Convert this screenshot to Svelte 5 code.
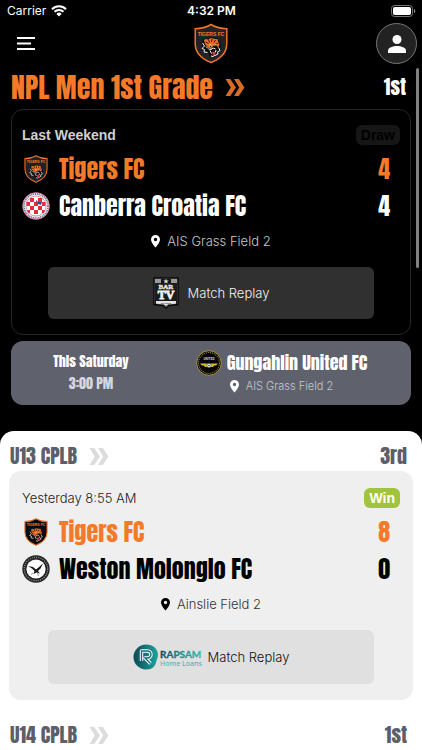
<script>
  const matches = {
    npl: {
      when: 'Last Weekend',
      result: 'Draw',
      teams: [
        { name: 'Tigers FC', score: 4, logo: 'tigers' },
        { name: 'Canberra Croatia FC', score: 4, logo: 'croatia' }
      ],
      venue: 'AIS Grass Field 2',
      sponsor: 'bartv'
    },
    u13: {
      when: 'Yesterday 8:55 AM',
      result: 'Win',
      teams: [
        { name: 'Tigers FC', score: 8, logo: 'tigers' },
        { name: 'Weston Molonglo FC', score: 0, logo: 'weston' }
      ],
      venue: 'Ainslie Field 2',
      sponsor: 'rapsam'
    }
  };
</script>

{#snippet tigers(cls)}
  <svg class={cls} viewBox="0 0 34 40" role="img" aria-label="Tigers FC crest">
    <path d="M17 1C12 4 6.500 5.200 1.200 5.200V20C1.200 29 8 35.500 17 39c9-3.500 15.800-10 15.800-19V5.200C27.500 5.200 22 4 17 1z" fill="#222126" stroke="#ee7328" stroke-width="1.500" />
    <text x="17" y="12" text-anchor="middle" font-family="Liberation Sans" font-weight="700" font-size="5" fill="#f47a2a">TIGERS FC</text>
    <path d="M8 18l2-3 3 0 4-1.500 5 1 2 0 1 3 2 4-1 5-3 4-4 3-3-1-2-4-5-1-1-4z" fill="#0c0c0c" />
    <path d="M10 17l1-1.500 3 .5 3-1.500 4 1 2.500 0 .5 2.500 1.500 3-1.500 3-2-2.500-3 1-1.500 3-3.500-1.500-3-3.500z" fill="#ec6d24" />
    <path d="M14.500 16l1 3M18 15.500l-.5 3M21.500 16.500l-1.500 2.500M11.500 18.500l3 1.500M24 20l-2.500.5M16 22.500l1.500 1.500" stroke="#111" stroke-width=".9" />
    <path d="M8.500 19.500l2 3-2.500 2.500 2.500 1-.5 2.500 3.500.500M12 23l2 2M24.500 24l1.500 3-2.500 1.500.500 2-3 1.500M14.500 25.500l2.500.500 2-1.500 2.500 1" fill="none" stroke="#f4f4f4" stroke-width="1" />
    <path d="M16 27l1.500 3M22 26.500l-.5 2.500M17 32.500l2 .5 2-1.500" stroke="#fff" stroke-width="1" fill="none" />
    <path d="M18 28.500l3-.5.500 3-2.500 1.500z" fill="#d63238" />
    <path d="M15.500 21l2 .5M20.500 21.500l2-.5" stroke="#f9e49b" stroke-width=".9" />
  </svg>
{/snippet}

{#snippet croatia()}
  <svg class="crest" viewBox="0 0 28 28" role="img" aria-label="Canberra Croatia crest">
    <circle cx="14" cy="14" r="13.500" fill="#f3f0f4" />
    <circle cx="14" cy="14" r="12" fill="none" stroke="#60609a" stroke-width="1.500" stroke-dasharray="1.100 .8" />
    <circle cx="14" cy="14" r="13.300" fill="none" stroke="#dc5264" stroke-width=".6" />
    <circle cx="14" cy="14" r="10" fill="#fff" stroke="#cc3342" stroke-width=".5" />
    <path d="M8 6h4v4H8zM16 6h4v4h-4zM4.500 10H8v4H4.500zM12 10h4v4h-4zM20 10h3.500v4H20zM8 14h4v4H8zM16 14h4v4h-4zM5 18h3v3H6zM12 18h4v4h-4zM20 18h3l-1 3h-2z" fill="#e22e3d" />
    <path d="M14 8l2 2h4l-1 3-3-1-2-2z" fill="#434c88" />
  </svg>
{/snippet}

{#snippet weston()}
  <svg class="crest" viewBox="0 0 28 28" role="img" aria-label="Weston Molonglo crest">
    <circle cx="14" cy="14" r="13.700" fill="#252525" />
    <circle cx="14" cy="14" r="11.700" fill="none" stroke="#999" stroke-width="1.200" stroke-dasharray="1 1.200" />
    <circle cx="14" cy="14" r="9.600" fill="#fff" />
    <path d="M6 11l5 1 3 2.500 2.500-2L21 8.500l-2.500 5-2.500 2.500 2 2.500-3.500-1-3 1.500 1-3-2.500-2.500z" fill="#161616" />
    <path d="M15 17l1.500 4M11 18l-2 1.500" fill="none" stroke="#777" stroke-width=".8" />
  </svg>
{/snippet}

{#snippet gungahlin()}
  <svg class="away-crest" viewBox="0 0 26 26" role="img" aria-label="Gungahlin United crest">
    <circle cx="13" cy="13" r="12.300" fill="#080808" stroke="#b6a23d" stroke-width=".9" />
    <circle cx="13" cy="13" r="10.500" fill="none" stroke="#9a8b3d" stroke-width="1.100" stroke-dasharray="1 1" />
    <circle cx="13" cy="13" r="9.300" fill="#050505" />
    <text x="13" y="10" text-anchor="middle" font-family="Liberation Sans" font-weight="700" font-size="3" fill="#ddd">UNITED</text>
    <path d="M4 13.500h7l2 1 2-1h7l-2 2h-2l-1 1.500H9L8 15.500H6z" fill="#d9bd32" />
    <circle cx="13" cy="15.500" r="2.200" fill="#eee" stroke="#222" stroke-width=".5" />
    <circle cx="13" cy="15.500" r=".7" fill="#111" />
  </svg>
{/snippet}

{#snippet bartv()}
  <svg class="bartv" viewBox="0 0 26 32" role="img" aria-label="Bar TV Sports">
    <path d="M1 1h24v26.500L16 28.500l-3 2.500-3-2.500-9-1z" fill="#999" stroke="#090909" stroke-width="1.500" stroke-linejoin="round" />
    <path d="M2 6h22v21l-8 .5-3 2-3-2-8-.5z" fill="#1c1c1c" />
    <path d="M8 2h10v5H8z" fill="#171717" />
    <path d="M13 1.800l.8 1.700 1.900.1-1.500 1.100.6 1.900-1.800-1-1.800 1 .6-1.900-1.500-1.100 1.900-.1z" fill="#ddd" />
    <text x="13" y="11.500" text-anchor="middle" font-family="Liberation Serif" font-weight="700" font-size="7" fill="#e5e5e5" stroke="#e5e5e5" stroke-width=".4">BAR</text>
    <text x="13" y="21.800" text-anchor="middle" font-family="Liberation Serif" font-weight="700" font-size="12" fill="#f2f2f2" stroke="#f2f2f2" stroke-width=".8">TV</text>
    <path d="M3 24h20v2.700l-7.500.5L13 29l-2.500-1.800-7.500-.5z" fill="#e2e2e2" />
    <text x="13" y="26.800" text-anchor="middle" font-family="Liberation Sans" font-weight="700" font-size="2.500" fill="#333">SPORTS</text>
  </svg>
{/snippet}

{#snippet rapsam()}
  <svg class="rapsam" viewBox="0 0 70 28" role="img" aria-label="Rapsam Home Loans">
    <defs>
      <linearGradient id="disc" x1="0" y1="0" x2="1" y2="0"><stop stop-color="#0b4a57" /><stop offset="1" stop-color="#21a49c" /></linearGradient>
      <linearGradient id="word" x1="0" y1="0" x2="1" y2="0"><stop stop-color="#124b59" /><stop offset="1" stop-color="#35bfb4" /></linearGradient>
    </defs>
    <path d="M13 1.500c7 0 12.500 4.500 12 11-.2 2-1 3.500-1.500 5.500-1 5-4 8.500-10.500 8.500A12.500 12.500 0 0 1 13 1.500z" fill="url(#disc)" />
    <path d="M8.500 18V8h6a3.500 3.500 0 0 1 0 7h-2.500l5.500 5.500" fill="none" stroke="#fff" stroke-width="3.400" stroke-linejoin="round" />
    <path d="M8.500 18.500V8h6a3.500 3.500 0 0 1 0 7h-2.500l5.500 5.500" fill="none" stroke="#146d74" stroke-width="1.400" />
    <text x="27" y="15" font-family="Lato" font-weight="700" font-size="10" fill="url(#word)" stroke="url(#word)" stroke-width=".3">RAPSAM</text>
    <text x="27" y="22.500" font-family="Noto Sans" font-weight="500" font-size="7" fill="#4fb8b2">Home Loans</text>
  </svg>
{/snippet}

{#snippet chevrons()}
  <svg class="chevrons" viewBox="0 0 20 18" aria-hidden="true">
    <path d="M0 0h5l6 9-6 9H0l5.500-9zM9 0h5l6 9-6 9H9l5.500-9z" fill="currentColor" />
  </svg>
{/snippet}

{#snippet venue(name)}
  <p class="venue">
    <svg class="pin" viewBox="0 0 9 13" aria-hidden="true">
      <path d="M4.500 0A4.500 4.500 0 0 0 0 4.500C0 7.700 4.500 12.500 4.500 12.500S9 7.700 9 4.500A4.500 4.500 0 0 0 4.500 0zm0 6.200a1.700 1.700 0 1 1 0-3.400 1.700 1.700 0 0 1 0 3.400z" fill="currentColor" />
    </svg>
    <span>{name}</span>
  </p>
{/snippet}

{#snippet heading(title, rank)}
  <h2 class="heading">
    <a href="#ladder"><span>{title}</span>{@render chevrons()}</a>
    <span class="rank">{rank}</span>
  </h2>
{/snippet}

{#snippet match(m)}
  <article class="match">
    <div class="match-top">
      <span class="when">{m.when}</span>
      <span class="result">{m.result}</span>
    </div>
    {#each m.teams as team}
      <div class="team" class:own={team.logo === 'tigers'}>
        {#if team.logo === 'tigers'}
          {@render tigers('crest')}
        {:else if team.logo === 'croatia'}
          {@render croatia()}
        {:else}
          {@render weston()}
        {/if}
        <span class="name">{team.name}</span>
        <span class="score">{team.score}</span>
      </div>
    {/each}
    {@render venue(m.venue)}
    <button class="replay" type="button">
      {#if m.sponsor === 'bartv'}{@render bartv()}{:else}{@render rapsam()}{/if}
      <span>Match Replay</span>
    </button>
  </article>
{/snippet}

<div class="app">
  <div class="status">
    <span class="carrier">
      Carrier
      <svg width="16" height="12" viewBox="0 0 16 12" aria-hidden="true">
        <path d="M1 4.200a10 10 0 0 1 14 0M3.500 6.800a6.400 6.400 0 0 1 9 0" fill="none" stroke="#fff" stroke-width="2" />
        <path d="M8 11.500L5.400 8.900a3.700 3.700 0 0 1 5.200 0z" fill="#fff" />
      </svg>
    </span>
    <span class="clock">4:32 PM</span>
    <svg class="battery" width="25" height="12" viewBox="0 0 25 12" aria-hidden="true">
      <rect x=".5" y=".5" width="21" height="11" rx="3" fill="none" stroke="#777" />
      <rect x="2" y="2" width="18" height="8" rx="1.700" fill="#fff" />
      <path d="M23 4c1.700.5 1.700 3.500 0 4z" fill="#888" />
    </svg>
  </div>

  <header>
    <button class="menu" type="button" aria-label="Menu">
      <svg width="18" height="13" viewBox="0 0 18 13"><path d="M0 1h18M0 6.500h14M0 12h18" stroke="#fff" stroke-width="2" /></svg>
    </button>
    {@render tigers('brand')}
    <button class="profile" type="button" aria-label="Profile">
      <svg width="18" height="18" viewBox="0 0 18 18"><circle cx="9" cy="4.500" r="4.500" fill="#fff" /><path d="M0 18v-2.500C0 12.500 5 11 9 11s9 1.500 9 4.500V18z" fill="#fff" /></svg>
    </button>
  </header>

  <main>
    <section class="featured">
      {@render heading('NPL Men 1st Grade', '1st')}
      {@render match(matches.npl)}
      <article class="next">
        <div class="kickoff">
          <span>This Saturday</span>
          <span class="time">3:00 PM</span>
        </div>
        <div class="opponent">
          <div class="away">{@render gungahlin()}<span>Gungahlin United FC</span></div>
          {@render venue('AIS Grass Field 2')}
        </div>
      </article>
    </section>
    <section class="grades">
      {@render heading('U13 CPLB', '3rd')}
      {@render match(matches.u13)}
      {@render heading('U14 CPLB', '1st')}
    </section>
    <div class="scrollbar"></div>
  </main>
</div>

<style>
  :global(body) { margin: 0; background: #000; }
  .app {
    --display: Anton, "Liberation Sans Narrow", "Arial Narrow", sans-serif;
    --orange: #f47a2a;
    display: flex;
    flex-direction: column;
    height: 100vh;
    overflow: hidden;
    background: #000;
    color: #fff;
    font-family: "Liberation Sans", Arial, sans-serif;
  }
  .app :global(*) { box-sizing: border-box; }
  svg { display: block; flex: none; }
  button { border: 0; padding: 0; background: none; color: inherit; font: inherit; cursor: pointer; }

  .status, header {
    display: grid;
    grid-template-columns: 1fr auto 1fr;
    align-items: center;
    flex: none;
  }
  .status { height: 22px; padding: 0 6px 0 7px; font: 400 12px/16px Inter, sans-serif; }
  .carrier { display: flex; align-items: center; gap: 5px; }
  .clock { font-weight: 600; }
  .battery { justify-self: end; }
  header { height: 43px; padding: 0 5px 0 17px; }
  .menu { width: 20px; height: 40px; display: flex; align-items: center; }
  .brand { width: 34px; height: 41px; margin-right: 12px; }
  .profile {
    justify-self: end;
    display: flex;
    align-items: center;
    justify-content: center;
    width: 41px;
    height: 41px;
    border: 1px solid #777;
    border-radius: 50%;
    background: #222;
  }

  main { position: relative; flex: 1; min-height: 0; overflow-y: auto; scrollbar-width: none; }
  .scrollbar { position: absolute; top: 3px; right: 3px; width: 3px; height: 200px; border-radius: 2px; background: #808080; }

  .heading {
    display: flex;
    align-items: center;
    justify-content: space-between;
    margin: 0;
    padding: 0 5px 0 0;
    font: 400 20px/28px var(--display);
  }
  .heading a { display: flex; align-items: center; gap: 12px; color: inherit; text-decoration: none; }
  .chevrons { width: 20px; height: 17px; }
  .featured { padding: 0 11px 26px; }
  .featured .heading { height: 44px; font-size: 28px; }
  .featured .heading a { color: var(--orange); }
  .featured .rank { font-size: 20px; }
  .featured .chevrons { color: #d66c25; }

  .match { padding: 15px 10px; border: 1px solid #262626; border-radius: 12px; }
  .match-top { display: flex; align-items: center; justify-content: space-between; height: 20px; margin-bottom: 5px; }
  .when { font-size: 14px; line-height: 20px; }
  .featured .when { font-weight: 700; color: #d0d0d0; }
  .result { padding: 0 5px; border-radius: 6px; background: #161616; color: #000; font: 700 14px/20px "Liberation Sans", sans-serif; }
  .team {
    display: flex;
    align-items: center;
    height: 37px;
    padding-right: 10px;
    font: 400 24px/36px var(--display);
  }
  .crest { width: 28px; height: 28px; margin-right: 9px; }
  .name { flex: 1; }
  .own { color: var(--orange); }
  .venue {
    display: flex;
    align-items: center;
    justify-content: center;
    gap: 7px;
    margin: 7px 0 16px;
    font: 300 13px/20px Inter, sans-serif;
  }
  .venue span { color: #c8c8c8; }
  .pin { width: 9px; height: 13px; }
  .replay {
    display: flex;
    align-items: center;
    justify-content: center;
    gap: 9px;
    width: calc(100% - 52px);
    height: 52px;
    margin: 0 26px;
    border-radius: 6px;
    background: #303030;
    color: #f0f0f0;
    font: 300 13px/20px Inter, sans-serif;
  }
  .bartv { width: 26px; height: 32px; }
  .rapsam { width: 70px; height: 28px; overflow: visible; }

  .next { display: flex; align-items: center; height: 64px; margin-top: 6px; border-radius: 12px; background: #5f626d; }
  .kickoff { display: flex; flex-direction: column; align-items: center; width: 40%; font: 400 14px/22px var(--display); }
  .time { color: #d6d7dc; }
  .opponent { flex: 1; padding-right: 19px; }
  .away { display: flex; align-items: center; justify-content: center; gap: 5px; font: 400 18px/26px var(--display); }
  .away-crest { width: 26px; height: 26px; }
  .next .venue { margin: 0; font-size: 11px; }
  .next .venue span { color: #c5c7ce; }

  .grades { padding: 10px 9px; border-radius: 14px 14px 0 0; background: #fff; color: #000; }
  .grades .heading { height: 30px; padding: 0 6px 0 1px; color: #5c5f6a; }
  .grades .chevrons { color: #dcdcdc; }
  .grades .match { margin-bottom: 20px; padding: 17px 13px 16px; border: 0; background: #efefef; }
  .grades .when { font: 300 13px/20px Inter, sans-serif; color: #222; }
  .grades .result { background: #a1c43c; color: #fff; }
  .grades .own .crest > path:first-child { fill: #0b0b0d; }
  .grades .venue span { color: #333; }
  .grades .replay { gap: 5px; height: 54px; background: #e0e0e0; color: #111; }
</style>
